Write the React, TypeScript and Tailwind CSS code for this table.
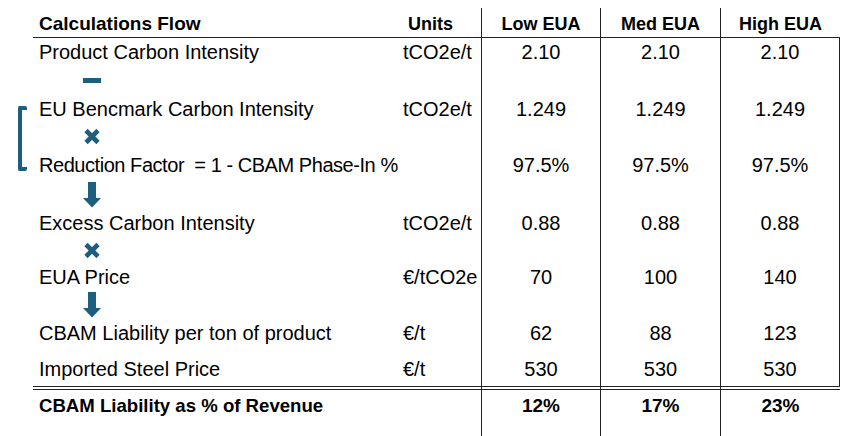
import React from 'react';

type DataRow = { kind: 'data'; label: string; unit: string; vals: string[]; h: string; lh: string; tight?: boolean };
type IconRow = { kind: 'icon'; icon: 'minus' | 'times' | 'arrow'; h: string; lh: string };
type Row = DataRow | IconRow;

const ROWS: Row[] = [
    { kind: 'data', label: 'Product Carbon Intensity', unit: 'tCO2e/t', vals: ['2.10', '2.10', '2.10'], h: 'h-[28px]', lh: 'leading-[28px]' },
    { kind: 'icon', icon: 'minus', h: 'h-[29px]', lh: 'leading-[29px]' },
    { kind: 'data', label: 'EU Bencmark Carbon Intensity', unit: 'tCO2e/t', vals: ['1.249', '1.249', '1.249'], h: 'h-[28px]', lh: 'leading-[28px]' },
    { kind: 'icon', icon: 'times', h: 'h-[27px]', lh: 'leading-[27px]' },
    { kind: 'data', label: 'Reduction Factor\u00a0 = 1 - CBAM Phase-In %', unit: '', vals: ['97.5%', '97.5%', '97.5%'], h: 'h-[30px]', lh: 'leading-[30px]', tight: true },
    { kind: 'icon', icon: 'arrow', h: 'h-[30px]', lh: 'leading-[30px]' },
    { kind: 'data', label: 'Excess Carbon Intensity', unit: 'tCO2e/t', vals: ['0.88', '0.88', '0.88'], h: 'h-[27px]', lh: 'leading-[27px]' },
    { kind: 'icon', icon: 'times', h: 'h-[26px]', lh: 'leading-[26px]' },
    { kind: 'data', label: 'EUA Price', unit: '€/tCO2e', vals: ['70', '100', '140'], h: 'h-[28px]', lh: 'leading-[28px]' },
    { kind: 'icon', icon: 'arrow', h: 'h-[28px]', lh: 'leading-[28px]' },
    { kind: 'data', label: 'CBAM Liability per ton of product', unit: '€/t', vals: ['62', '88', '123'], h: 'h-[28px]', lh: 'leading-[28px]' },
    // last body row sits lower
    { kind: 'data', label: 'Imported Steel Price', unit: '€/t', vals: ['530', '530', '530'], h: 'h-[39px]', lh: 'pt-[10px] leading-[24px]' },
];

const SCENARIOS = [
    { title: 'Low EUA', total: '12%', w: 'w-[119px]' },
    { title: 'Med EUA', total: '17%', w: 'w-[120px]' },
    { title: 'High EUA', total: '23%', w: 'w-[120px]' },
];

const ICON = '#1d5e7f';
const FONT = { fontFamily: '"Liberation Sans", Arial, sans-serif' };

const FlowIcon = ({ icon }: { icon: IconRow['icon'] }) => {
    if (icon === 'minus') {
        return <div className="w-[18px] h-[5px] bg-[#1d5e7f]" />;
    }
    if (icon === 'times') {
        return (
            <svg width="18" height="17" viewBox="0 0 18 17">
                <path d="M3 2.5 L15 14.5 M15 2.5 L3 14.5" stroke={ICON} strokeWidth="4.6" strokeLinecap="butt" />
            </svg>
        );
    }
    return (
        <svg width="18" height="26" viewBox="0 0 18 26">
            <path d="M5 0 H13 V16 H18 L9 25.5 L0 16 H5 Z" fill={ICON} />
        </svg>
    );
};

// double rule segment shared by every column
const Rule = () => <div className="h-[4px] border-t border-b border-[#222]" />;

export default function App() {
    return (
        <div className="w-[864px] h-[436px] bg-white text-black pt-[8px] flex" style={FONT}>
            {/* left gutter with the bracket grouping rows 3-5 */}
            <div className="w-[33px] shrink-0 pt-[98px]">
                <div className="ml-[18px] w-[9px] h-[65px] border-l-4 border-t-4 border-b-4 border-[#1d5e7f] rounded-[2px]" />
            </div>

            {/* Label column */}
            <div className="w-[367px] shrink-0 flex flex-col">
                <div className="h-[30px] border-b border-[#222] pl-[6px] pt-[3px] leading-[26px] text-[19px] font-bold">Calculations Flow</div>
                {ROWS.map((r, idx) =>
                    r.kind === 'data' ? (
                        <div key={idx} className={`${r.h} ${r.lh} pl-[6px] text-[20px] whitespace-nowrap ${r.tight ? 'tracking-[-0.45px]' : ''}`}>
                            {r.label}
                        </div>
                    ) : (
                        <div key={idx} className={`${r.h} flex items-center pl-[50px]`}>
                            <FlowIcon icon={r.icon} />
                        </div>
                    )
                )}
                <Rule />
                <div className="h-[36px] pt-[5px] pl-[6px] leading-[22px] text-[18.6px] font-bold whitespace-nowrap">
                    CBAM Liability as % of Revenue
                </div>
            </div>

            {/* Units column */}
            <div className="w-[81px] shrink-0 flex flex-col">
                <div className="h-[30px] border-b border-[#222] pl-[8px] pt-[3px] leading-[26px] text-[18px] font-bold">Units</div>
                {ROWS.map((r, idx) => (
                    <div key={idx} className={`${r.h} ${r.lh} pl-[3px] text-[20px] whitespace-nowrap`}>
                        {r.kind === 'data' ? r.unit : '\u00a0'}
                    </div>
                ))}
                <Rule />
                <div className="h-[36px]" />
            </div>

            {/* Scenario columns, each with its own full-height rule on the left */}
            {SCENARIOS.map((s, i) => (
                <div key={s.title} className={`${s.w} shrink-0 flex flex-col border-l-[1.5px] border-[#222]`}>
                    <div className="h-[30px] border-b border-[#222] pt-[3px] leading-[26px] text-center text-[18px] font-bold">{s.title}</div>
                    <div className={`flex flex-col ${i === 2 ? 'border-r border-[#222]' : ''}`}>
                        {ROWS.map((r, idx) => (
                            <div key={idx} className={`${r.h} ${r.lh} text-center text-[20px]`}>
                                {r.kind === 'data' ? r.vals[i] : '\u00a0'}
                            </div>
                        ))}
                    </div>
                    <Rule />
                    <div className="h-[36px] pt-[5px] leading-[22px] text-center text-[19px] font-bold">{s.total}</div>
                </div>
            ))}
        </div>
    );
}
